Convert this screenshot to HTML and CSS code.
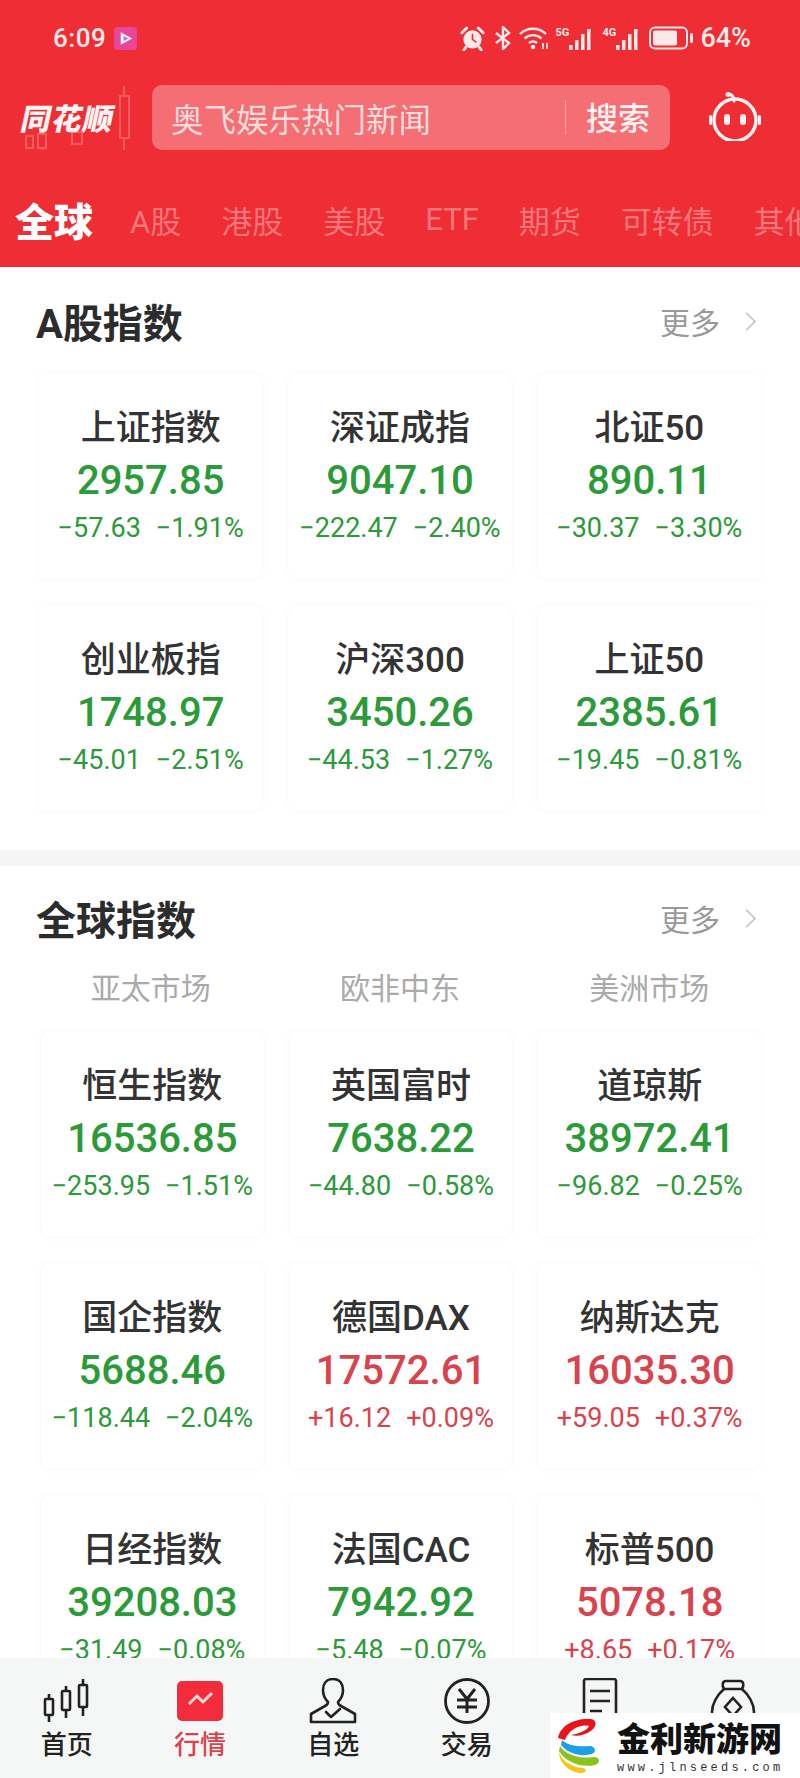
FILE: index.html
```html
<!DOCTYPE html>
<html lang="zh-CN">
<head>
<meta charset="UTF-8" />
<meta name="viewport" content="width=device-width, initial-scale=1" />
<title>同花顺 - 行情</title>
<link rel="stylesheet" href="styles.css">
</head>
<body>
<div class="phone">

  <header class="top">
    <div class="status">
      <div class="status-left">
        <span class="clock">6:09</span>
        <svg class="play" viewBox="0 0 24 24" aria-hidden="true"><rect width="24" height="24" rx="4" fill="#e6479a"/><path d="M7 5.500l12 6.500-12 6.500z" fill="#fbeef6"/><path d="M10 9.500l5 2.500-5 2.500z" fill="#8f86c9"/></svg>
      </div>
      <div class="status-right">
        <svg class="st-alarm" viewBox="0 0 26 26" aria-hidden="true"><circle cx="13" cy="14" r="9.500" fill="#fbe9e9"/><path d="M13 8v6l4 3" fill="none" stroke="#ee2d34" stroke-width="1.600"/><path d="M2 7l5-5M24 7l-5-5M6 22l-2 3M20 22l2 3" stroke="#fbe9e9" stroke-width="3" stroke-linecap="round"/></svg>
        <svg class="st-bt" viewBox="0 0 18 24" aria-hidden="true"><path d="M2 7l13 10-6 6V1l6 6L2 17" fill="none" stroke="#fbe9e9" stroke-width="2.400"/></svg>
        <svg class="st-wifi" viewBox="0 0 30 24" aria-hidden="true"><g fill="none" stroke="#fbe9e9" stroke-width="2.400"><path d="M1 8c7-7 19-7 26 0"/><path d="M5.500 12.500c5-4.500 12-4.500 17 0"/><path d="M10 17c2.500-2 5.500-2 8 0"/></g><circle cx="14" cy="21" r="2.200" fill="#fbe9e9"/><path d="M24 17v6M28 17v6" stroke="#fbe9e9" stroke-width="1.800"/></svg>
        <span class="st-net">
          <span class="st-tag">5G</span>
          <svg class="st-bars" viewBox="0 0 26 24" aria-hidden="true"><g fill="#fbe9e9"><rect x="0" y="19" width="3.500" height="5"/><rect x="6" y="14" width="3.500" height="10"/><rect x="12" y="8" width="3.500" height="16"/><rect x="18" y="3" width="3.500" height="21"/></g></svg>
        </span>
        <span class="st-net">
          <span class="st-tag">4G</span>
          <svg class="st-bars" viewBox="0 0 26 24" aria-hidden="true"><g fill="#fbe9e9"><rect x="0" y="19" width="3.500" height="5"/><rect x="6" y="14" width="3.500" height="10"/><rect x="12" y="8" width="3.500" height="16"/><rect x="18" y="3" width="3.500" height="21"/></g></svg>
        </span>
        <svg class="st-batt" viewBox="0 0 44 24" aria-hidden="true"><rect x="1" y="1.500" width="37" height="21" rx="5" fill="none" stroke="#fbe9e9" stroke-width="2"/><rect x="4" y="4.500" width="24" height="15" rx="2" fill="#fbe9e9"/><rect x="41" y="7" width="3" height="10" rx="1.500" fill="#fbe9e9"/></svg>
        <span class="st-pct">64%</span>
      </div>
    </div>

    <div class="searchrow">
      <div class="logo">
        <svg class="logo-bg" viewBox="0 0 116 64" aria-hidden="true"><g fill="none" stroke="#f6595e" stroke-width="2"><rect x="98" y="10" width="9" height="42"/><path d="M102 0v10M102 52v12"/><rect x="4" y="50" width="7" height="12"/><rect x="16" y="48" width="8" height="14"/><path d="M20 62v2"/><rect x="50" y="46" width="10" height="12"/></g></svg>
        <span class="logo-text">同花顺</span>
      </div>
      <div class="search">
        <span class="search-hint">奥飞娱乐热门新闻</span>
        <span class="search-btn">搜索</span>
      </div>
      <svg class="robot" viewBox="0 0 56 50" aria-hidden="true"><path d="M27 10c0-4-1-6-5-7" fill="none" stroke="#fdf2f2" stroke-width="3" stroke-linecap="round"/><circle cx="21" cy="3.500" r="2.500" fill="#fdf2f2"/><circle cx="28" cy="29" r="21" fill="none" stroke="#fdf2f2" stroke-width="3.500"/><rect x="2" y="24" width="3" height="10" rx="1.500" fill="#fdf2f2"/><rect x="51" y="24" width="3" height="10" rx="1.500" fill="#fdf2f2"/><rect x="17" y="23" width="6" height="11" rx="3" fill="#fdf2f2"/><rect x="33" y="23" width="6" height="11" rx="3" fill="#fdf2f2"/></svg>
    </div>

    <nav class="markets">
      <span class="market market-on">全球</span>
      <span class="market">A股</span>
      <span class="market">港股</span>
      <span class="market">美股</span>
      <span class="market">ETF</span>
      <span class="market">期货</span>
      <span class="market">可转债</span>
      <span class="market">其他</span>
    </nav>
  </header>

  <main class="content">
    <section class="block block-a">
      <div class="block-head">
        <h2>A股指数</h2>
        <span class="more">更多<svg viewBox="0 0 14 24" aria-hidden="true"><path d="M2 2l10 10L2 22" fill="none" stroke="#c4c4c4" stroke-width="2"/></svg></span>
      </div>
      <div class="cards">
        <div class="card down"><div class="name">上证指数</div><div class="price">2957.85</div><div class="change"><span>−57.63</span><span>−1.91%</span></div></div>
        <div class="card down"><div class="name">深证成指</div><div class="price">9047.10</div><div class="change"><span>−222.47</span><span>−2.40%</span></div></div>
        <div class="card down"><div class="name">北证50</div><div class="price">890.11</div><div class="change"><span>−30.37</span><span>−3.30%</span></div></div>
        <div class="card down"><div class="name">创业板指</div><div class="price">1748.97</div><div class="change"><span>−45.01</span><span>−2.51%</span></div></div>
        <div class="card down"><div class="name">沪深300</div><div class="price">3450.26</div><div class="change"><span>−44.53</span><span>−1.27%</span></div></div>
        <div class="card down"><div class="name">上证50</div><div class="price">2385.61</div><div class="change"><span>−19.45</span><span>−0.81%</span></div></div>
      </div>
    </section>

    <section class="block block-g">
      <div class="block-head">
        <h2>全球指数</h2>
        <span class="more">更多<svg viewBox="0 0 14 24" aria-hidden="true"><path d="M2 2l10 10L2 22" fill="none" stroke="#c4c4c4" stroke-width="2"/></svg></span>
      </div>
      <div class="regions">
        <span>亚太市场</span>
        <span>欧非中东</span>
        <span>美洲市场</span>
      </div>
      <div class="cards">
        <div class="card down"><div class="name">恒生指数</div><div class="price">16536.85</div><div class="change"><span>−253.95</span><span>−1.51%</span></div></div>
        <div class="card down"><div class="name">英国富时</div><div class="price">7638.22</div><div class="change"><span>−44.80</span><span>−0.58%</span></div></div>
        <div class="card down"><div class="name">道琼斯</div><div class="price">38972.41</div><div class="change"><span>−96.82</span><span>−0.25%</span></div></div>
        <div class="card down"><div class="name">国企指数</div><div class="price">5688.46</div><div class="change"><span>−118.44</span><span>−2.04%</span></div></div>
        <div class="card up"><div class="name">德国DAX</div><div class="price">17572.61</div><div class="change"><span>+16.12</span><span>+0.09%</span></div></div>
        <div class="card up"><div class="name">纳斯达克</div><div class="price">16035.30</div><div class="change"><span>+59.05</span><span>+0.37%</span></div></div>
        <div class="card down"><div class="name">日经指数</div><div class="price">39208.03</div><div class="change"><span>−31.49</span><span>−0.08%</span></div></div>
        <div class="card down"><div class="name">法国CAC</div><div class="price">7942.92</div><div class="change"><span>−5.48</span><span>−0.07%</span></div></div>
        <div class="card up"><div class="name">标普500</div><div class="price">5078.18</div><div class="change"><span>+8.65</span><span>+0.17%</span></div></div>
      </div>
    </section>
  </main>

  <footer class="tabbar">
    <div class="tab">
      <svg viewBox="0 0 48 46" aria-hidden="true"><g fill="none" stroke="#222" stroke-width="2.600"><rect x="2" y="21" width="8" height="16" rx="1"/><path d="M6 16v5M6 37v7"/><rect x="19" y="13" width="8" height="19" rx="1"/><path d="M23 8v5M23 32v8"/><rect x="36" y="7" width="8" height="22" rx="1"/><path d="M40 1v6M40 29v9"/></g></svg>
      <span>首页</span>
    </div>
    <div class="tab tab-on">
      <svg viewBox="0 0 48 46" aria-hidden="true"><rect x="1" y="3" width="46" height="40" rx="5" fill="#f22c3a"/><path d="M13 26l8-8 6 6 9-9" fill="none" stroke="#fbd9d9" stroke-width="3"/></svg>
      <span>行情</span>
    </div>
    <div class="tab">
      <svg viewBox="0 0 48 46" aria-hidden="true"><g fill="none" stroke="#222" stroke-width="2.600" stroke-linejoin="round"><path d="M24 1c-7 0-10 5-10 11 0 5 2 9 5 12 0 2-1 3-3 4L2 36v8h44v-8l-14-8c-2-1-3-2-3-4 3-3 5-7 5-12 0-6-3-11-10-11z"/><path d="M17 34l5 5 9-8" stroke-linecap="round"/></g></svg>
      <span>自选</span>
    </div>
    <div class="tab">
      <svg viewBox="0 0 48 46" aria-hidden="true"><circle cx="24" cy="23" r="21.500" fill="none" stroke="#222" stroke-width="2.800"/><path d="M16 11l8 10 8-10M14 22h20M14 29h20M24 21v14" fill="none" stroke="#222" stroke-width="3"/></svg>
      <span>交易</span>
    </div>
    <div class="tab">
      <svg viewBox="0 0 48 46" aria-hidden="true"><g fill="none" stroke="#222" stroke-width="2.600"><path d="M8 46V3c0-1 1-2 2-2h28c1 0 2 1 2 2v43"/><path d="M14 13h20M14 23h20M14 33h12"/></g></svg>
    </div>
    <div class="tab">
      <svg viewBox="0 0 48 46" aria-hidden="true"><g fill="none" stroke="#222" stroke-width="2.600"><path d="M15 11c-2-3-2-8 2-8h14c4 0 4 5 2 8z"/><path d="M15 11C8 17 3 26 3 34c0 8 6 12 21 12s21-4 21-12c0-8-5-17-12-23"/><path d="M24 20l8 9-8 9-8-9z"/></g></svg>
    </div>
  </footer>

  <!-- 水印 -->
  <div class="watermark">
    <svg class="wm-logo" viewBox="0 0 50 56" aria-hidden="true">
      <path d="M2 20C4 8 18 0 34 1c7 0 7 7 2 11-6 5-15 7-21 5 6-1 16-4 18-9-8-2-20 3-24 14z" fill="#e8141c"/>
      <path d="M6 22c6 6 18 7 28 6 5 0 7 6 2 8-10 3-24 0-31-9z" fill="#1c9fe6"/>
      <path d="M4 28c6 10 22 13 34 11 6 0 7 6 1 8-12 3-29-2-36-14z" fill="#8cc21c"/>
      <path d="M3 34c3 9 12 15 24 16 4 1 3 5-1 5C14 55 3 45 3 34z" fill="#f5c518"/>
    </svg>
    <div class="wm-text">
      <span class="wm-name">金利新游网</span>
      <span class="wm-url">www.jlnseeds.com</span>
    </div>
  </div>

</div>
</body>
</html>
```

FILE: styles.css
```css
* { box-sizing: border-box; }
html, body { margin: 0; padding: 0; }
body {
  width: 800px;
  height: 1778px;
  overflow: hidden;
  background: #fff;
  font-family: Roboto, "Noto Sans CJK SC", sans-serif;
  color: #333;
}
.phone {
  position: relative;
  width: 800px;
  height: 1778px;
  display: flex;
  flex-direction: column;
  overflow: hidden;
}

/* red header */
.top {
  height: 267px;
  background: #ee2d34;
  flex: none;
  overflow: hidden;
}
.status {
  height: 76px;
  padding: 0 49px 0 53px;
  display: flex;
  justify-content: space-between;
  align-items: center;
  color: #fbe9e9;
}
.status-left { display: flex; align-items: center; gap: 8px; }
.clock { font-size: 26px; font-weight: 500; letter-spacing: 0.5px; }
.play { width: 23px; height: 23px; }
.status-right { display: flex; align-items: center; gap: 6px; }
.st-alarm { width: 25px; height: 25px; margin-right: 3px; }
.st-bt { width: 18px; height: 24px; margin-right: 1px; }
.st-wifi { width: 30px; height: 24px; }
.st-net { display: flex; align-items: flex-start; margin-right: 1px; }
.st-tag { font-size: 11px; font-weight: 700; line-height: 14px; width: 14px; }
.st-bars { width: 26px; height: 24px; }
.st-batt { width: 44px; height: 24px; }
.st-pct { font-size: 27px; font-weight: 500; margin-left: 1px; }

.searchrow {
  height: 74px;
  margin-top: 4px;
  padding-left: 18px;
  display: flex;
  align-items: center;
}
.logo {
  position: relative;
  width: 134px;
  height: 66px;
  flex: none;
  display: flex;
  align-items: center;
}
.logo-bg {
  position: absolute;
  left: 4px;
  top: 2px;
  width: 116px;
  height: 64px;
}
.logo-text {
  position: relative;
  font-size: 30px;
  font-weight: 900;
  color: #fdf3f3;
  letter-spacing: 1px;
  transform: skewX(-12deg);
  display: block;
  margin-left: 4px;
}
.search {
  width: 518px;
  height: 65px;
  border-radius: 10px;
  background: #f56e73;
  display: flex;
  align-items: center;
  justify-content: space-between;
  padding: 0 20px 0 19px;
  flex: none;
}
.search-hint { font-size: 32.500px; color: #fbdcdc; }
.search-btn {
  font-size: 32px;
  color: #fdf0f0;
  font-weight: 500;
  line-height: 32px;
  border-left: 1px solid #f9a5a7;
  padding: 3px 0 0 20px;
}
.robot { width: 58px; height: 50px; margin: -3px 0 0 36px; flex: none; }

.markets {
  height: 80px;
  margin-top: 25px;
  padding-left: 15px;
  display: flex;
  align-items: center;
  gap: 40px;
  white-space: nowrap;
}
.market { font-size: 31px; color: #f6777b; flex: none; }
.market-on { font-size: 39px; font-weight: 900; color: #fff; margin-right: -3px; }

/* sections */
.content { flex: 1; overflow: hidden; min-height: 0; }
.block { padding: 0 38px; }
.block-a { padding-top: 30px; padding-bottom: 38px; border-bottom: 16px solid #f5f5f5; }
.block-g { padding-top: 28px; padding-left: 40px; }
.block-head {
  height: 48px;
  display: flex;
  justify-content: space-between;
  align-items: center;
}
.block-head h2 {
  margin: 0 0 0 -2px;
  font-size: 40px;
  font-weight: 700;
  color: #2c2c2c;
}
.block-g h2 { margin-left: -4px; }
.more {
  display: flex;
  align-items: center;
  gap: 24px;
  font-size: 30px;
  color: #999;
  margin-right: 4px;
}
.more svg { width: 13px; height: 21px; margin-right: 1px; }
.block-a .block-head { margin-bottom: 27px; }
.regions {
  height: 88px;
  margin-left: -2px;
  display: grid;
  grid-template-columns: repeat(3, 1fr);
  column-gap: 24px;
  align-items: center;
  text-align: center;
  font-size: 30px;
  color: #aaa;
}
.cards {
  display: grid;
  grid-template-columns: repeat(3, 1fr);
  gap: 24px;
}
.card {
  height: 208px;
  padding-top: 34px;
  border-radius: 10px;
  border: 1px solid #fafafa;
  box-shadow: 0 0 8px rgba(0, 0, 0, 0.025);
  text-align: center;
}
.name { font-size: 35px; font-weight: 500; line-height: 44px; color: #333; }
.price { font-size: 40px; font-weight: 500; line-height: 50px; margin-top: 5px; }
.change {
  font-size: 27px;
  line-height: 36px;
  margin-top: 4px;
  display: flex;
  justify-content: center;
  gap: 15px;
}
.down .price, .down .change { color: #2b9a38; }
.up .price, .up .change { color: #d9434d; }

/* bottom tabs */
.tabbar {
  height: 120px;
  flex: none;
  background: #f5f6f6;
  display: grid;
  grid-template-columns: repeat(6, 1fr);
}
.tab {
  padding-top: 20px;
  display: flex;
  flex-direction: column;
  align-items: center;
  font-size: 26px;
  color: #222;
}
.tab svg { width: 48px; height: 46px; }
.tab span { margin-top: 3px; line-height: 36px; font-weight: 500; }
.tab-on { color: #d9434d; }

/* watermark over the corner */
.watermark {
  position: absolute;
  right: 0;
  bottom: 0;
  width: 250px;
  height: 65px;
  background: #fff;
  display: flex;
  align-items: center;
  padding-left: 6px;
}
.wm-logo { width: 50px; height: 58px; flex: none; }
.wm-text { margin-left: 11px; display: flex; flex-direction: column; }
.wm-name {
  font-family: "Noto Sans CJK SC", sans-serif;
  font-size: 33px;
  font-weight: 900;
  line-height: 40px;
  color: #111;
  white-space: nowrap;
}
.wm-url {
  font-family: "Liberation Mono", monospace;
  font-size: 12px;
  line-height: 14px;
  margin-top: 4px;
  letter-spacing: 3.200px;
  color: #333;
  white-space: nowrap;
}
```
